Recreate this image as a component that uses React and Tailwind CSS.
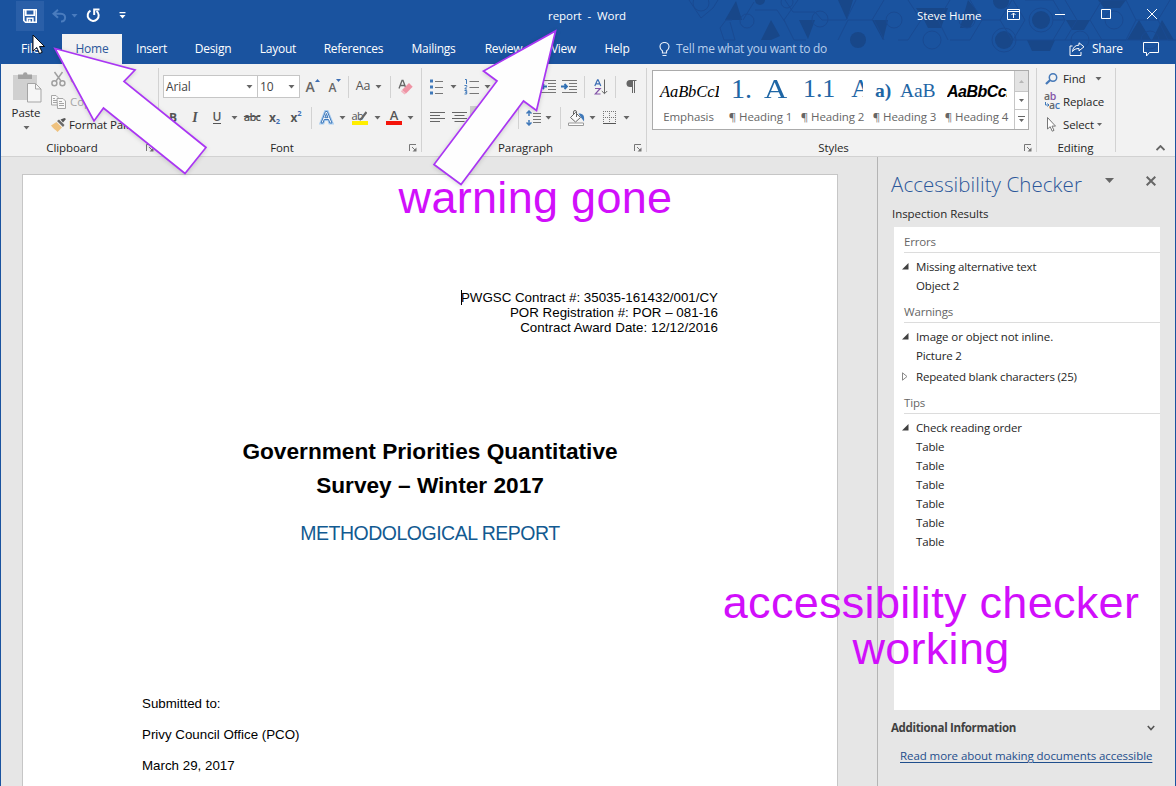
import React from "react";

const Chev = ({ c = "#666" }) => (
  <svg className="shrink-0" width="7" height="4" viewBox="0 0 7 4"><path d="M.5 0h6L3.500 3.500z" fill={c} /></svg>
);
const Sep = () => <span className="h-[22px] w-px shrink-0 bg-[#d2d2d2]" />;
const Slot = ({ className, children }) => (
  <span className={"flex h-full shrink-0 items-center justify-center " + className}>{children}</span>
);
const Launcher = () => (
  <svg className="absolute right-[4px] bottom-[4px]" width="8" height="8" viewBox="0 0 8 8" fill="none" stroke="#777">
    <path d="M.5 7V.5H7M3 3l3 3" /><path d="M7.5 3.5v4h-4z" fill="#777" stroke="none" />
  </svg>
);
const Group = ({ className, label, launcher, children }) => (
  <section className={"relative flex h-full shrink-0 flex-col " + className}>
    <div className="h-[75px] shrink-0">{children}</div>
    <div className="flex h-[17px] items-center justify-center text-[11.5px] text-[#262626]">{label}</div>
    {launcher && <Launcher />}
  </section>
);
const Divider = () => <span className="mt-[4px] h-[84px] w-px shrink-0 bg-[#d2d2d2]" />;

const Lines = ({ d }) => (
  <svg width="15" height="12" viewBox="0 0 15 12" stroke="#666" fill="none"><path d={d} /></svg>
);

const tabs = [
  ["Insert", "w-[61px]"], ["Design", "w-[62px]"], ["Layout", "w-[68px]"], ["References", "w-[83px]"],
  ["Mailings", "w-[77px]"], ["Review", "w-[63px]"], ["View", "w-[57px]"], ["Help", "w-[50px]"],
];

function HeaderPattern() {
  return (
    <svg className="absolute top-0 left-[676px]" width="500" height="64" viewBox="676 0 500 64">
      <g fill="#184789">
        <path d="M736 1l6 19h-17zM771 20l9 16-9 4h-10zM799 20h16l-7 19zM838 0h15l-6 20zM872 20h16l-5 20zM924 20l-8-12h32l-7 20h-13zM968 0l10 12-8 16h-10zM1027 40h28l-5 11h-18zM1066 20h24l-6 10h-12zM1098 0h28l-6 8h-16zM1139 20l-12 20h24zM1162 20l12 20h-22z" />
        <circle cx="858" cy="40" r="8" /><circle cx="1004" cy="40" r="9" /><circle cx="1041" cy="20" r="9" />
        <circle cx="1001" cy="1" r="8" /><circle cx="760" cy="0" r="5" />
      </g>
      <g fill="none" stroke="#194a92" strokeWidth="1">
        <path d="M689 0l12 18 12-10 5-8M732 20h-6l-6 8 4 12h11l-5-18M743 20l11-18M755 10h22l8 12M798 0l-14 20 10 20h12M785 0l8 12h22l7 8h24l10-20M838 40l10-20h24l12-20M884 40l-10-20M908 0l13 20-13 20h-10M948 40l-10-20 12-20M950 40h20l12-20h18l12 20M970 0l12 20M1000 20l12-20M1013 40l12-20-12-20M1025 0h28l12 20-12 20M1090 20l12-20h24l10 20-10 20h-24zM1065 20h-12M1065 40l12-20-12-20M1136 20h22l12-20M1100 40h76M1158 20l10 20h8M1013 40h92" />
        <circle cx="747" cy="21" r="7" /><circle cx="701" cy="3" r="8" /><circle cx="820" cy="19" r="8" />
        <circle cx="787" cy="2" r="6" /><circle cx="894" cy="20" r="8" /><circle cx="932" cy="40" r="9" />
        <circle cx="967" cy="20" r="8" /><circle cx="1080" cy="40" r="9" /><circle cx="1114" cy="20" r="9" />
        <circle cx="1041" cy="20" r="12" /><circle cx="1004" cy="40" r="12" /><circle cx="1150" cy="40" r="9" />
      </g>
    </svg>
  );
}

function Header() {
  return (
    <header className="relative h-[64px] shrink-0 bg-[#1a539f] text-white">
      <HeaderPattern />
      <div className="relative flex h-[31px] items-center text-[11.5px]">
        <div className="mt-px ml-[16px] flex h-[30px] w-[28px] items-center justify-center self-start bg-[#2a5fa8]">
          <svg width="14" height="14" viewBox="0 0 14 14" fill="none" stroke="#fff" strokeWidth="1.6">
            <path d="M.8.8h12.4v12.4H2.5L.8 11.5z" /><path d="M2.8 1v5.2h8.4V1M4.3 13V9.3h5.6V13" /><path d="M5.6 10.5h2V13h-2z" fill="#fff" stroke="none" />
          </svg>
        </div>
        <svg className="ml-[8px]" width="15" height="14" viewBox="0 0 15 14" fill="none" stroke="#4a7cbe" strokeWidth="2">
          <path d="M6 .8L1.500 4.800 6 8.800M1.500 4.800H9c5.500 0 5.500 8 0 7.800" />
        </svg>
        <span className="ml-[4px]"><Chev c="#4a7cbe" /></span>
        <svg className="ml-[8px]" width="15" height="15" viewBox="0 0 15 15" fill="none" stroke="#fff" strokeWidth="2">
          <path d="M4.500 2.600A5.500 5.500 0 1 0 10.500 3" /><path d="M8.200 7V1.500H13.500" />
        </svg>
        <svg className="ml-[18px]" width="7" height="7" viewBox="0 0 7 7"><path d="M.5 0h6v1.200h-6zM.5 3h6l-3 3.500z" fill="#fff" /></svg>
        <span className="ml-[422px] w-[96px] whitespace-pre text-[11.5px] tracking-[-0.05px]">report  -  Word</span>
        <span className="ml-[273px] w-[90px] tracking-[-0.02px]">Steve Hume</span>
        <svg width="13" height="11" viewBox="0 0 13 11" className="-mt-[3px]" fill="none" stroke="#fff"><path d="M.5.5h12v10H.5zM.5 2.500h12M6.500 9V4M4.500 6l2-2 2 2" /></svg>
        <svg className="-mt-[3px] ml-[35px]" width="10" height="10" viewBox="0 0 10 10"><path d="M0 5h10v1H0z" fill="#fff" /></svg>
        <svg className="-mt-[3px] ml-[36px]" width="10" height="10" viewBox="0 0 10 10" fill="none" stroke="#fff"><path d="M.5.5h9v9h-9z" /></svg>
        <svg className="-mt-[3px] ml-[36px]" width="10" height="10" viewBox="0 0 10 10" fill="none" stroke="#fff"><path d="M0 0l10 10M10 0L0 10" /></svg>
      </div>
      <nav className="relative mt-[3px] flex h-[30px] items-center text-[12px]">
        <span className="ml-[21px] w-[41px] tracking-[-0.2px]">File</span>
        <span className="mr-[-1px] flex h-full w-[60px] items-center justify-center bg-[#f2f2f2] tracking-[-0.2px] text-[#2b579a]">Home</span>
        {tabs.map(([t, w]) => (
          <span key={t} className={"flex shrink-0 justify-center whitespace-nowrap tracking-[-0.25px] " + w}>{t}</span>
        ))}
        <svg className="ml-[17px] shrink-0" width="11" height="15" viewBox="0 0 11 15" fill="none" stroke="#e4ecf7">
          <path d="M3.500 11V9C2 8 1 6.500 1 4.800a4.500 4.300 0 0 1 9 0C10 6.500 9 8 7.500 9v2zM3.500 13.500h4" strokeWidth="1.200" />
        </svg>
        <span className="ml-[6px] w-[393px] text-[12px] tracking-[-0.25px] whitespace-nowrap text-[#b9cfec]">Tell me what you want to do</span>
        <svg className="shrink-0" width="16" height="14" viewBox="0 0 16 14" fill="none" stroke="#fff">
          <path d="M3.500 4H1v9.500h11V10M10 .8l5 4-5 4V6.500c-3 0-5 .8-6.500 3C4 5.500 6 3.300 10 3.100z" />
        </svg>
        <span className="ml-[7px] w-[51px] shrink-0 tracking-[-0.3px]">Share</span>
        <svg className="shrink-0" width="16" height="15" viewBox="0 0 16 15" fill="none" stroke="#fff"><path d="M.5.5h15v10H6.500L3.500 14v-3.500h-3z" /></svg>
      </nav>
    </header>
  );
}

function Clipboard() {
  return (
    <Group className="w-[157px]" label={<span className="-ml-[15px]">Clipboard</span>} launcher>
      <div className="flex">
        <div className="flex w-[50px] flex-col items-center pt-[8px] text-[11.5px] text-[#262626]">
          <svg className="ml-[3px]" width="29" height="31" viewBox="0 0 29 31">
            <path d="M0 3h24v25H0z" fill="#d0d0d0" /><path d="M5 2.500h5a2.200 2.200 0 0 1 4.500 0H19V7H5z" fill="#a2a2a2" />
            <path d="M14.500 11.500h8l5.500 5.500v13h-13.500z" fill="#f6f6f6" stroke="#a5a5a5" /><path d="M22.500 11.500V17H28" fill="none" stroke="#a5a5a5" />
          </svg>
          <span className="mt-[1px] leading-[18px]">Paste</span>
          <span className="mt-[4px] flex"><Chev /></span>
        </div>
        <div className="flex flex-col pt-[3px] text-[11.5px] text-[#262626]">
          <div className="flex h-[23px] items-center gap-[4px] text-[#a6a6a6]">
            <svg width="15" height="16" viewBox="0 0 15 16" fill="none" stroke="#a0a0a0" strokeWidth="1.500">
              <path d="M3.500 1l6.500 9M11.500 1L5 10" /><circle cx="3.400" cy="12.300" r="2.500" /><circle cx="11.400" cy="12.300" r="2.500" />
            </svg>Cut
          </div>
          <div className="flex h-[23px] items-center gap-[4px] text-[#a6a6a6]">
            <svg width="15" height="14" viewBox="0 0 15 14" fill="#f8f8f8" stroke="#a5a5a5">
              <path d="M.5.5H5l2 2v7.500H.5zM2 3.500h2M2 5.500h4M2 7.500h4" /><path d="M6 3.500H12l2.500 2.500v7.500h-8zM8 6.500h3M8 8.500h5M8 10.500h5" />
            </svg>Copy
          </div>
          <div className="flex h-[23px] items-center gap-[2px]">
            <svg width="16" height="14" viewBox="0 0 16 14">
              <path d="M9.500 1.500l2.500 3L15 1l-1.500-1z" fill="#555" /><path d="M6 3l6 6 1.500-2L8 1.500z" fill="#6a6a6a" /><path d="M0 7.500L5.500 4l5.500 5.500L6.500 14C5 12 2 10.500 0 7.500z" fill="#efc27f" />
            </svg>
            <span className="whitespace-nowrap">Format Painter</span>
          </div>
        </div>
      </div>
    </Group>
  );
}

function FontGroup() {
  return (
    <Group className="w-[262px]" label={<span className="-ml-[16px]">Font</span>} launcher>
      <div className="mt-[11px] flex h-[23px] items-center pl-[4px] text-[12px] text-[#444]">
        <span className="flex h-[23px] w-[95px] shrink-0 items-center justify-between border border-[#c6c6c6] bg-white pr-[4px] pl-[2px]">Arial<Chev /></span>
        <span className="-ml-px flex h-[23px] w-[43px] shrink-0 items-center justify-between border border-[#c6c6c6] bg-white pr-[4px] pl-[2px]">10<Chev /></span>
        <Slot className="w-[25px]"><span className="text-[14px] font-semibold text-[#666]">A</span><svg className="-mt-[12px]" width="5" height="3"><path d="M0 3h5L2.500 0z" fill="#3c6eb4" /></svg></Slot>
        <Slot className="w-[20px]"><span className="mt-[2px] text-[12px] font-semibold text-[#666]">A</span><svg className="-mt-[12px]" width="5" height="3"><path d="M0 0h5L2.500 3z" fill="#3c6eb4" /></svg></Slot>
        <Slot className="w-[6px]"><Sep /></Slot>
        <Slot className="w-[24px]"><span className="text-[12.500px] text-[#555]">Aa</span></Slot>
        <Slot className="w-[7px]"><Chev /></Slot>
        <Slot className="w-[16px]"><Sep /></Slot>
        <Slot className="w-[15px]">
          <svg width="15" height="16" viewBox="0 0 15 16" className="shrink-0">
            <path d="M1 9.500L4 1.500h1l3 8M2.200 6.500h4.600" fill="none" stroke="#666" strokeWidth="1.300" />
            <path d="M4 11L11 4l3.700 3.700L8 14.500z" fill="#ef93a4" /><path d="M4 11l4 3.500-1.500 1-3.500-3z" fill="#f3b5c0" />
          </svg>
        </Slot>
      </div>
      <div className="mt-[8px] flex h-[23px] items-center pl-[3px] text-[12px] text-[#555]">
        <Slot className="w-[22px] font-bold">B</Slot>
        <Slot className="w-[22px]"><i className="font-['Liberation_Serif',serif] text-[14px] font-bold">I</i></Slot>
        <Slot className="w-[22px]"><span className="border-b border-[#555] leading-[12px] font-semibold">U</span></Slot>
        <Slot className="w-[12px]"><Chev /></Slot>
        <Slot className="w-[24px]"><span className="text-[11px] font-semibold tracking-[-0.8px] line-through">abc</span></Slot>
        <Slot className="w-[21px] font-bold">x<span className="mt-[9px] text-[7.5px] text-[#3c6eb4]">2</span></Slot>
        <Slot className="w-[22px] font-bold">x<span className="-mt-[8px] text-[7.5px] text-[#3c6eb4]">2</span></Slot>
        <Slot className="w-[8px]"><Sep /></Slot>
        <Slot className="w-[23px]">
          <svg width="15" height="15" viewBox="0 0 15 15" fill="none"><path d="M2 13L6.500 1.500h1.800L13 13h-2.200L9.600 9.500H5.200L4 13zM5.800 7.700H9L7.400 3.500z" stroke="#a9cdf0" strokeWidth="3" /><path d="M2 13L6.500 1.500h1.800L13 13h-2.200L9.600 9.500H5.200L4 13zM5.800 7.700H9L7.400 3.500z" fill="#fff" stroke="#3f78b9" /></svg>
        </Slot>
        <Slot className="w-[8px]"><Chev /></Slot>
        <Slot className="w-[27px]">
          <span className="flex w-[16px] flex-col">
            <span className="flex h-[11px] items-center text-[11px] leading-[9px] tracking-[-0.5px]">ab<svg className="-ml-[4px] shrink-0" width="8" height="11" viewBox="0 0 8 11"><path d="M7.500 2L3 8 .5 10" stroke="#666" strokeWidth="2.200" fill="none" /></svg></span>
            <span className="h-[4px] bg-[#ffee00]" />
          </span>
        </Slot>
        <Slot className="w-[8px]"><Chev /></Slot>
        <Slot className="w-[26px]">
          <span className="flex w-[16px] flex-col items-center text-[13px] leading-[11px] font-semibold">A<span className="h-[4px] w-full bg-[#f4140a]" /></span>
        </Slot>
        <Slot className="w-[6px]"><Chev /></Slot>
      </div>
    </Group>
  );
}

function Indent({ out }) {
  return (
    <svg width="17" height="14" viewBox="0 0 17 14" className="shrink-0">
      <path d="M1 .5h15M8 3.500h8M8 6.500h8M8 9.500h8M1 12.500h15" stroke="#777" />
      <path d={out ? "M7 6.500H2M4 4L1.500 6.500 4 9" : "M0 6.500h5M3.500 4L6 6.500 3.500 9"} fill="none" stroke="#2f6fb3" strokeWidth="1.800" />
    </svg>
  );
}

function Paragraph() {
  return (
    <Group className="w-[224px]" label={<span className="-ml-[17px]">Paragraph</span>} launcher>
      <div className="mt-[11px] flex h-[23px] items-center text-[#444]">
        <Slot className="w-[29px]">
          <svg width="13" height="16" viewBox="0 0 13 16" className="shrink-0"><path d="M0 .5h3v3H0zM0 6.500h3v3H0zM0 12.500h3v3H0z" fill="#3f78b9" /><path d="M5 2.500h8M5 8.500h8M5 14.500h8" stroke="#777" /></svg>
        </Slot>
        <Slot className="w-[5px]"><Chev /></Slot>
        <Slot className="w-[30px]">
          <svg width="15" height="16" viewBox="0 0 15 16" className="shrink-0"><path d="M1 .5h1.500V5M.5 6.500h2.200v1.200L.8 10H3M.5 11.500h2.200V15H.5M1 13.200h1.500" fill="none" stroke="#3f78b9" /><path d="M5.500 2.500H15M5.500 8.500H15M5.500 14.500H15" stroke="#777" /></svg>
        </Slot>
        <Slot className="w-[3px]"><Chev /></Slot>
        <Slot className="w-[49px]" />
        <Slot className="w-[20px]"><Indent out /></Slot>
        <Slot className="w-[22px]"><Indent /></Slot>
        <Slot className="w-[9px]"><Sep /></Slot>
        <Slot className="w-[23px]">
          <svg width="14" height="16" viewBox="0 0 14 16" className="shrink-0" fill="none">
            <path d="M.8 7L3.500.8h.6L6.800 7M1.800 4.800h4" stroke="#3c6eb4" strokeWidth="1.200" />
            <path d="M1 9.500h5.200L1.200 15h5.300" stroke="#8355a8" strokeWidth="1.200" />
            <path d="M10.500.5v14M7.800 12l2.700 2.700 2.700-2.700" stroke="#666" />
          </svg>
        </Slot>
        <Slot className="w-[6px]"><Sep /></Slot>
        <Slot className="w-[26px]">
          <svg width="11" height="13" viewBox="0 0 11 13" className="shrink-0"><path d="M10.500.5H4M6.500 .5V13M8.500.5V13" stroke="#666" fill="none" /><path d="M6.500 0H4a3.500 3.500 0 0 0 0 7h2.500z" fill="#666" /></svg>
        </Slot>
      </div>
      <div className="mt-[8px] flex h-[23px] items-center pl-[4px]">
        <Slot className="w-[22px]"><Lines d="M0 .5h15M0 3.500h10M0 6.500h15M0 9.500h10" /></Slot>
        <Slot className="w-[22px]"><Lines d="M0 .5h15M2.500 3.500h10M0 6.500h15M2.500 9.500h10" /></Slot>
        <Slot className="w-[22px] bg-[#cdcdcd]"><Lines d="M0 .5h15M5 3.500h10M0 6.500h15M5 9.500h10" /></Slot>
        <Slot className="w-[24px]" />
        <Slot className="w-[4px]"><Sep /></Slot>
        <Slot className="w-[27px]">
          <svg width="15" height="16" viewBox="0 0 15 16" className="shrink-0" fill="none"><path d="M3 1v5M.5 3.500L3 1l2.500 2.500M3 10v5M.5 12.500L3 15l2.500-2.500" stroke="#3f78b9" strokeWidth="1.500" /><path d="M7 3.500h8M7 6.500h8M7 9.500h8M7 12.500h8" stroke="#777" /></svg>
        </Slot>
        <Slot className="w-[3px]"><Chev /></Slot>
        <Slot className="w-[21px]"><Sep /></Slot>
        <Slot className="w-[10px]">
          <svg width="17" height="16" viewBox="0 0 17 16" className="shrink-0"><path d="M2.500 7.500l5-5 5 5-5 4.500z" fill="#fafafa" stroke="#666" /><path d="M5.500 4.500V2a1.500 1.500 0 0 1 3 0v5" fill="none" stroke="#666" /><path d="M10.500 3.500c5 0 6 2 5.500 8l-3-4z" fill="#3f78b9" /><path d="M.5 13h15v2.500H.5z" fill="#fff" stroke="#999" /></svg>
        </Slot>
        <Slot className="w-[22px]"><Chev /></Slot>
        <Slot className="w-[13px]">
          <svg width="13" height="13" viewBox="0 0 13 13" className="shrink-0" fill="none"><path d="M0 .5h13M.5 0v12M6.500 0v12M12.500 0v12M0 6.500h13" stroke="#777" strokeDasharray="1 1" /><path d="M0 12.500h13" stroke="#555" /></svg>
        </Slot>
        <Slot className="w-[21px]"><Chev /></Slot>
      </div>
    </Group>
  );
}

const StyleCell = ({ label, children }) => (
  <div className="flex w-[72px] shrink-0 flex-col items-center">
    <div className="flex h-[36px] w-[60px] items-end overflow-hidden whitespace-pre text-[#1f66a5]">{children}</div>
    <span className="-ml-px whitespace-nowrap text-[11.5px] leading-[20px] text-[#666]">{label}</span>
  </div>
);

function Styles() {
  const serif = "font-['Liberation_Serif',serif]";
  return (
    <Group className="w-[389px]" label={<span className="-ml-[16px]">Styles</span>} launcher>
      <div className="mt-[6px] ml-[5px] flex h-[60px] w-[377px] border border-[#ababab] bg-white">
        <StyleCell label="Emphasis"><i className={serif + " ml-[1px] text-[16.5px] leading-[30px] text-black"}>AaBbCcD</i></StyleCell>
        <StyleCell label="¶ Heading 1"><span className={serif + " flex text-[28px] leading-[37px]"}>1.<span className="ml-[12px] inline-block origin-left scale-x-115">A</span></span></StyleCell>
        <StyleCell label="¶ Heading 2"><span className={serif + " text-[26px] leading-[36px]"}>1.1<span className="ml-[16px]">A</span></span></StyleCell>
        <StyleCell label="¶ Heading 3"><span className={serif + " text-[19.5px] leading-[32px]"}><b>a)</b><span className="ml-[9px]">AaB</span></span></StyleCell>
        <StyleCell label="¶ Heading 4"><b className="font-['Liberation_Sans',sans-serif] text-[16px] leading-[31px] tracking-[-0.5px] text-black italic">AaBbCcD</b></StyleCell>
        <div className="ml-auto flex w-[14px] flex-col border-l border-[#c6c6c6]">
          <span className="flex h-[20px] items-center justify-center bg-[#e3e3e3]"><svg width="5" height="3"><path d="M0 3h5L2.500 0z" fill="#b5b5b5" /></svg></span>
          <span className="flex h-[19px] items-center justify-center border-y border-[#c6c6c6]"><svg width="5" height="3"><path d="M0 0h5L2.500 3z" fill="#666" /></svg></span>
          <span className="flex h-[19px] items-center justify-center"><svg width="7" height="7"><path d="M0 0h7v1H0zM1 3h5L3.500 6z" fill="#666" /></svg></span>
        </div>
      </div>
    </Group>
  );
}

function Editing() {
  return (
    <Group className="w-[78px]" label={<span className="-ml-px">Editing</span>}>
      <div className="flex flex-col pt-[3px] pl-[7px] text-[11.5px] text-[#262626]">
        <div className="flex h-[23px] items-center">
          <svg className="ml-[1px] shrink-0" width="13" height="12" viewBox="0 0 13 12" fill="none" stroke="#4679b8"><circle cx="8" cy="4.500" r="3.700" strokeWidth="1.500" /><path d="M5.200 7L1 11" strokeWidth="2.300" /></svg>
          <span className="ml-[5px] w-[32px]">Find</span><Chev />
        </div>
        <div className="flex h-[23px] items-center">
          <span className="flex h-[18px] w-[17px] flex-col text-[10.5px] leading-[8px] font-semibold tracking-[-0.3px] text-[#666]">
            <span className="-mt-px">a<span className="text-[#8355a8]">b</span></span>
            <span className="mt-px flex items-center pl-[1px]"><svg width="4" height="5" viewBox="0 0 4 5"><path d="M.5 0v3H4M2.500 1.500L4 3 2.500 4.500" fill="none" stroke="#3f78b9" /></svg>a<span className="text-[#3f78b9]">c</span></span>
          </span>
          <span className="ml-[2px] tracking-[-0.1px]">Replace</span>
        </div>
        <div className="flex h-[23px] items-center">
          <svg className="ml-[3px] shrink-0" width="10" height="15" viewBox="0 0 10 15"><path d="M.5.5v11.500l2.700-2.300 2 4.500 1.800-.8-2-4.300h3.500z" fill="#fff" stroke="#777" /></svg>
          <span className="ml-[6px] w-[34px] tracking-[-0.15px]">Select</span><svg width="5" height="3"><path d="M0 0h5L2.500 3z" fill="#666" /></svg>
        </div>
      </div>
    </Group>
  );
}

function Ribbon() {
  return (
    <div className="relative flex h-[93px] shrink-0 border-b border-[#d2d2d2] bg-[#f2f2f2] tracking-[-0.1px]">
      <Clipboard /><Divider /><FontGroup /><Divider /><Paragraph /><Divider /><Styles /><Divider /><Editing /><Divider />
      <svg className="mt-auto mr-[10px] mb-[5px] ml-auto" width="9" height="6" viewBox="0 0 9 6" fill="none" stroke="#666" strokeWidth="1.800"><path d="M.5 5l4-4 4 4" /></svg>
    </div>
  );
}

function Page() {
  return (
    <main className="mt-[17px] ml-[21px] flex w-[816px] shrink-0 flex-col border border-b-0 border-[#c6c6c6] bg-white px-[119px] font-['Liberation_Sans',sans-serif] text-black">
      <div className="mt-[115px] text-right text-[13.330px] leading-[15px]">
        <p><span className="-mr-px inline-block h-[15px] w-px bg-black align-top" />PWGSC Contract #: 35035-161432/001/CY</p>
        <p className="tracking-[0.020px]">POR Registration #: POR – 081-16</p>
        <p className="tracking-[0.030px]">Contract Award Date: 12/12/2016</p>
      </div>
      <h1 className="mt-[99px] text-center text-[22.670px] leading-[34px] font-bold">Government Priorities Quantitative<br />Survey – Winter 2017</h1>
      <h2 className="mt-[19px] text-center text-[19.500px] leading-[24px] tracking-[-0.5px] text-[#125a91]">METHODOLOGICAL REPORT</h2>
      <div className="mt-[143px] text-[13.330px] leading-[31px]">
        <p>Submitted to:</p><p>Privy Council Office (PCO)</p><p>March 29, 2017</p>
      </div>
    </main>
  );
}

const Section = ({ children }) => (
  <div className="ml-[10px] flex h-[22px] items-center border-b border-[#dcdcdc] text-[#666]">{children}</div>
);
const Issue = ({ open, children }) => (
  <div className="flex h-[19px] items-center">
    <span className="flex w-[22px] pl-[8px]">
      {open ? <svg width="7" height="7"><path d="M6.500 0v6.500H0z" fill="#404040" /></svg>
        : <svg width="6" height="9" viewBox="0 0 6 9"><path d="M.5.8v7.400L5 4.500z" fill="#fff" stroke="#888" /></svg>}
    </span>{children}
  </div>
);
const Item = ({ children }) => <div className="flex h-[19px] items-center pl-[22px]">{children}</div>;

function Pane() {
  return (
    <aside className="flex w-[298px] shrink-0 flex-col border-l border-[#b4b4b4] text-[11.5px] tracking-[-0.16px] text-[#262626]">
      <div className="mt-[11px] flex h-[32px] items-center pl-[13px]">
        <span className="w-[214px] text-[20.500px] font-light tracking-[0.070px] whitespace-nowrap text-[#2b579a]">Accessibility Checker</span>
        <svg className="mb-[7px] shrink-0" width="9" height="5"><path d="M0 0h9L4.500 5z" fill="#666" /></svg>
        <svg className="mb-[7px] ml-[32px] shrink-0" width="10" height="10" viewBox="0 0 10 10" stroke="#666" strokeWidth="2"><path d="M.7.7l8.600 8.600M9.300.7L.7 9.300" /></svg>
      </div>
      <div className="mt-[1px] h-[26px] pl-[14px] leading-[26px] tracking-[-0.050px]">Inspection Results</div>
      <div className="ml-[16px] flex h-[483px] w-[266px] flex-col bg-white pt-[4px]">
        <Section>Errors</Section>
        <div className="mt-[4px] mb-[7px]"><Issue open>Missing alternative text</Issue><Item>Object 2</Item></div>
        <div className="-mt-px"><Section>Warnings</Section></div>
        <div className="mt-[4px]"><Issue open><span className="tracking-[-0.1px]">Image or object not inline.</span></Issue><Item>Picture 2</Item></div>
        <div className="mt-[2px] mb-[6px]"><Issue>Repeated blank characters (25)</Issue></div>
        <Section>Tips</Section>
        <div className="mt-[4px]">
          <Issue open>Check reading order</Issue>
          {[1, 2, 3, 4, 5, 6].map((n) => <Item key={n}>Table</Item>)}
        </div>
      </div>
      <div className="mt-[8px] flex h-[20px] items-center justify-between pr-[20px] pl-[13px] font-bold tracking-[-0.33px] text-[#404040]">
        Additional Information
        <svg width="8" height="6" viewBox="0 0 8 6" fill="none" stroke="#555" strokeWidth="1.600"><path d="M.8 1L4 4.500 7.200 1" /></svg>
      </div>
      <a className="mt-[8px] ml-[22px] leading-[20px] tracking-[-0.080px] whitespace-nowrap text-[#1f4e8c] underline underline-offset-2">Read more about making documents accessible</a>
    </aside>
  );
}

export default function App() {
  return (
    <div className="relative flex h-[786px] w-[1176px] flex-col overflow-hidden bg-[#e6e6e6] font-['Open_Sans','Noto_Sans',sans-serif]">
      <Header />
      <div className="flex min-h-0 flex-1 flex-col border-x border-[#1a539f]">
        <Ribbon />
        <div className="flex min-h-0 flex-1">
          <Page />
          <div className="flex-1" />
          <Pane />
        </div>
      </div>
      <svg className="absolute top-0 left-0" width="1176" height="786" viewBox="0 0 1176 786">
        <path d="M33 35v16l3.800-3.500 2.700 6 2.700-1.200-2.700-5.800h5z" fill="#fff" stroke="#000" strokeWidth=".9" />
        <g fill="#fefefe" stroke="#aa36f3" strokeWidth="1.700" className="drop-shadow-sm">
          <path d="M55 48.500L135 70l-11 11.500 82 66L185 173.500 103.500 108 94 121z" />
          <path d="M555.500 31L536.500 110.500 523.500 101 461 184.500 434 164.500 497 81 483.500 71z" />
        </g>
      </svg>
      <div className="absolute top-[175px] left-[398px] w-[275px] text-center font-['Liberation_Sans',sans-serif] text-[45px] leading-[46px] tracking-[0.300px] whitespace-nowrap text-[#d10ffb]">warning gone</div>
      <div className="absolute top-[580px] left-[720px] w-[422px] text-center font-['Liberation_Sans',sans-serif] text-[45px] leading-[46px] tracking-[0.300px] whitespace-nowrap text-[#d10ffb]">accessibility checker<br />working</div>
    </div>
  );
}
